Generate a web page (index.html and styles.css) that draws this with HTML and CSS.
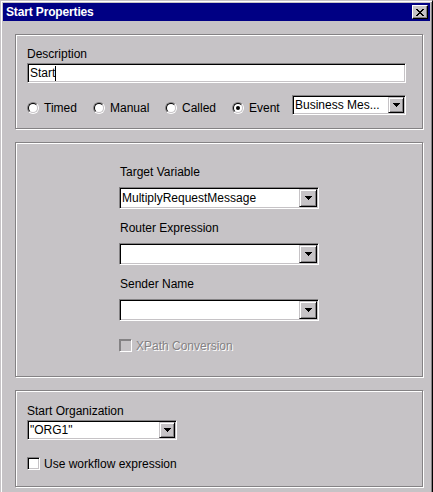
FILE: index.html
```html
<!DOCTYPE html>
<html>
<head>
<meta charset="utf-8">
<title>Start Properties</title>
<link rel="stylesheet" href="styles.css">
</head>
<body>
<div class="window">
  <div class="titlebar">
    <span class="title">Start Properties</span>
    <span class="close">
      <svg width="8" height="7" viewBox="0 0 8 7" shape-rendering="crispEdges">
        <path d="M0 0h2v1H0zM6 0h2v1H6zM1 1h2v1H1zM5 1h2v1H5zM2 2h4v1H2zM3 3h2v1H3zM2 4h4v1H2zM1 5h2v1H1zM5 5h2v1H5zM0 6h2v1H0zM6 6h2v1H6z" fill="#000"/>
      </svg>
    </span>
  </div>
  <div class="content">
    <div class="panel panel-desc">
      <div class="label">Description</div>
      <div class="field field-desc"><span class="caret">Start</span></div>
      <div class="radio-row">
        <div class="opt opt-timed"><span class="radio"></span>Timed</div>
        <div class="opt opt-manual"><span class="radio"></span>Manual</div>
        <div class="opt opt-called"><span class="radio"></span>Called</div>
        <div class="opt opt-event"><span class="radio checked"></span>Event</div>
        <div class="combo combo-sm combo-event">
          <span class="val">Business Mes...</span>
          <span class="btn"><svg width="7" height="4" viewBox="0 0 7 4" shape-rendering="crispEdges"><path d="M0 0h7v1H0zM1 1h5v1H1zM2 2h3v1H2zM3 3h1v1H3z" fill="#000"/></svg></span>
        </div>
      </div>
    </div>

    <div class="panel panel-target">
      <div class="label">Target Variable</div>
      <div class="combo combo-lg">
        <span class="val">MultiplyRequestMessage</span>
        <span class="btn"><svg width="7" height="4" viewBox="0 0 7 4" shape-rendering="crispEdges"><path d="M0 0h7v1H0zM1 1h5v1H1zM2 2h3v1H2zM3 3h1v1H3z" fill="#000"/></svg></span>
      </div>
      <div class="label">Router Expression</div>
      <div class="combo combo-lg">
        <span class="val"></span>
        <span class="btn"><svg width="7" height="4" viewBox="0 0 7 4" shape-rendering="crispEdges"><path d="M0 0h7v1H0zM1 1h5v1H1zM2 2h3v1H2zM3 3h1v1H3z" fill="#000"/></svg></span>
      </div>
      <div class="label">Sender Name</div>
      <div class="combo combo-lg">
        <span class="val"></span>
        <span class="btn"><svg width="7" height="4" viewBox="0 0 7 4" shape-rendering="crispEdges"><path d="M0 0h7v1H0zM1 1h5v1H1zM2 2h3v1H2zM3 3h1v1H3z" fill="#000"/></svg></span>
      </div>
      <div class="check-row check-xpath">
        <span class="checkbox disabled"></span><span class="disabled-text">XPath Conversion</span>
      </div>
    </div>

    <div class="panel panel-org">
      <div class="label">Start Organization</div>
      <div class="combo combo-sm combo-org">
        <span class="val">"ORG1"</span>
        <span class="btn"><svg width="7" height="4" viewBox="0 0 7 4" shape-rendering="crispEdges"><path d="M0 0h7v1H0zM1 1h5v1H1zM2 2h3v1H2zM3 3h1v1H3z" fill="#000"/></svg></span>
      </div>
      <div class="check-row check-workflow">
        <span class="checkbox"></span><span>Use workflow expression</span>
      </div>
    </div>
  </div>
</div>
</body>
</html>
```

FILE: styles.css
```css
html, body {
  margin: 0;
  padding: 0;
  overflow: hidden;
  background: #c6c3c6;
}

body {
  font-family: "Liberation Sans", Arial, sans-serif;
  font-size: 12px;
  color: #000;
}

.window {
  width: 433px;
  height: 500px;
  box-sizing: border-box;
  background: #c6c3c6;
  border: 1px solid;
  border-color: #c6c3c6 #000 #000 #c6c3c6;
  box-shadow: inset 1px 1px 0 #fff, inset -1px -1px 0 #848284;
  padding: 2px;
}

.titlebar {
  height: 18px;
  background: #000084;
  display: flex;
  align-items: center;
  padding-left: 3px;
}

.title {
  color: #fff;
  font-weight: bold;
  font-size: 12px;
  line-height: 14px;
  letter-spacing: -0.15px;
}

.close {
  margin-left: auto;
  margin-right: 2px;
  width: 16px;
  height: 14px;
  box-sizing: border-box;
  background: #c6c3c6;
  border: 1px solid;
  border-color: #fff #000 #000 #fff;
  box-shadow: inset -1px -1px 0 #848284;
  display: flex;
  align-items: center;
  justify-content: center;
  padding-right: 1px;
}

.close svg {
  display: block;
}

.content {
  padding: 13px 0 0 12px;
}

.panel {
  width: 408px;
  box-sizing: border-box;
  border: 1px solid #848284;
  box-shadow: inset 1px 1px 0 #fff, 1px 1px 0 #fff;
  margin-bottom: 13px;
}

.panel-desc {
  height: 95px;
  padding: 12px 0 0 11px;
}

.panel-target {
  height: 235px;
  padding: 22px 0 0 103px;
}

.panel-org {
  height: 97px;
  padding: 13px 0 0 11px;
}

.label {
  line-height: 14px;
  height: 14px;
  white-space: nowrap;
}

.panel-desc .label,
.panel-org .label {
  margin-bottom: 2px;
}

.panel-target .label {
  margin-bottom: 8px;
  padding-left: 1px;
}

.field {
  height: 20px;
  box-sizing: border-box;
  background: #fff;
  border: 1px solid;
  border-color: #848284 #fff #fff #848284;
  box-shadow: inset 1px 1px 0 #000, inset -1px -1px 0 #c6c3c6;
  padding: 1px 2px;
  display: flex;
  align-items: center;
  white-space: nowrap;
}

.field-desc {
  width: 379px;
}

.caret {
  border-right: 1px solid #000;
  line-height: 14px;
  height: 15px;
  padding-right: 0;
}

.radio-row {
  margin-top: 12px;
  height: 20px;
  display: flex;
  align-items: flex-start;
}

.opt {
  margin-top: 6px;
  height: 14px;
  line-height: 14px;
  display: flex;
  align-items: center;
  white-space: nowrap;
}

.opt-timed { width: 66px; }
.opt-manual { width: 72px; }
.opt-called { width: 67px; }
.opt-event { width: 60px; }

.radio {
  width: 12px;
  height: 12px;
  box-sizing: border-box;
  border-radius: 50%;
  border: 1px solid;
  border-color: #848284 #fff #fff #848284;
  margin-right: 5px;
  flex: none;
  position: relative;
}

.radio::before {
  content: "";
  position: absolute;
  inset: 0;
  border-radius: 50%;
  border: 1px solid;
  border-color: #000 #c6c3c6 #c6c3c6 #000;
  background: #fff;
}

.radio.checked::after {
  content: "";
  position: absolute;
  width: 4px;
  height: 4px;
  border-radius: 50%;
  background: #000;
  left: 3px;
  top: 3px;
}

.combo {
  display: flex;
  box-sizing: border-box;
  background: #fff;
  border: 1px solid;
  border-color: #848284 #fff #fff #848284;
  box-shadow: inset 1px 1px 0 #000, inset -1px -1px 0 #c6c3c6;
  padding: 1px;
  white-space: nowrap;
}

.combo .val {
  flex: 1;
  display: flex;
  align-items: center;
  padding-left: 1px;
  overflow: hidden;
}

.combo .btn {
  flex: none;
  box-sizing: border-box;
  background: #c6c3c6;
  border: 1px solid;
  border-color: #c6c3c6 #000 #000 #c6c3c6;
  box-shadow: inset 1px 1px 0 #fff, inset -1px -1px 0 #848284;
  display: flex;
  align-items: center;
  justify-content: center;
}

.combo .btn svg {
  display: block;
}

.combo-sm {
  height: 20px;
}

.combo-sm .btn {
  width: 16px;
  height: 16px;
}

.combo-event {
  width: 114px;
}

.combo-org {
  width: 150px;
}

.combo-lg {
  width: 200px;
  height: 22px;
  margin-bottom: 12px;
}

.combo-lg .btn {
  width: 18px;
  height: 18px;
}

.check-row {
  display: flex;
  align-items: center;
  height: 13px;
  line-height: 14px;
  white-space: nowrap;
}

.check-xpath {
  margin-top: 18px;
}

.check-workflow {
  margin-top: 17px;
}

.checkbox {
  width: 13px;
  height: 13px;
  box-sizing: border-box;
  flex: none;
  background: #fff;
  border: 1px solid;
  border-color: #848284 #fff #fff #848284;
  box-shadow: inset 1px 1px 0 #000, inset -1px -1px 0 #c6c3c6;
  margin-right: 4px;
}

.checkbox.disabled {
  background: #c6c3c6;
  box-shadow: inset 1px 1px 0 #848284, inset -1px -1px 0 #c6c3c6;
}

.disabled-text {
  color: #848284;
  text-shadow: 1px 1px 0 #fff;
}
```
